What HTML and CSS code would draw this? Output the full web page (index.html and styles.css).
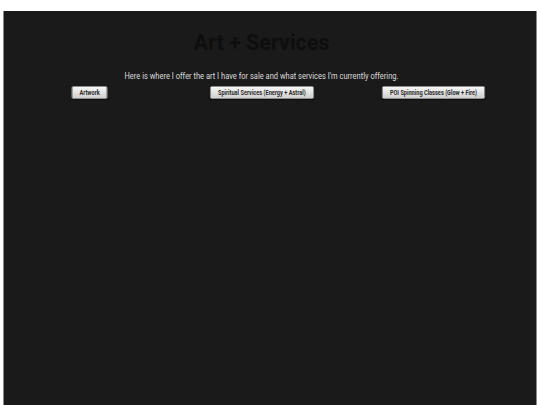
FILE: index.html
```html
<!DOCTYPE html>
<html lang="en">
<head>
<meta charset="utf-8">
<title>Art + Services</title>
<link rel="stylesheet" href="styles.css">
</head>
<body>
<main class="panel">
  <h1 class="title">Art + Services</h1>
  <p class="intro">Here is where I offer the art I have for sale and what services I'm currently offering.</p>
  <nav class="choices">
    <button class="choice" type="button">Artwork</button>
    <button class="choice" type="button">Spiritual Services (Energy + Astral)</button>
    <button class="choice" type="button">POI Spinning Classes (Glow + Fire)</button>
  </nav>
</main>
</body>
</html>
```

FILE: styles.css
```css
html, body {
  margin: 0;
  padding: 0;
  background: #ffffff;
}

body {
  font-family: Roboto, "Liberation Sans", sans-serif;
}

.panel {
  margin: 11px 3px 0;
  min-height: 394px;
  box-sizing: border-box;
  background: #1a1a1a;
  border-left: 1px solid #8a8a8a;
  border-right: 1px solid #8a8a8a;
  padding: 19px 17px 0 0;
  display: flex;
  flex-direction: column;
}

.title {
  margin: 0;
  font-size: 21.5px;
  line-height: 26px;
  font-weight: 700;
  color: #0e0e0e;
  text-align: center;
}

.intro {
  margin: 14px 0 0;
  font-size: 9px;
  line-height: 12px;
  color: #dcdcdc;
  text-align: center;
  transform: scaleX(0.835);
}

.choices {
  margin-top: 4px;
  display: grid;
  grid-template-columns: repeat(3, 1fr);
  justify-items: center;
}

.choice {
  height: 13px;
  padding: 0 9px;
  font-family: Roboto, "Liberation Sans", sans-serif;
  font-size: 7px;
  font-weight: 700;
  color: #2a2a2a;
  background: linear-gradient(#f6f6f6, #cfcfcf);
  border: 1px solid #9a9a9a;
  border-radius: 2px;
  box-shadow: 0 1px 1px rgba(0, 0, 0, 0.5);
  transform: scaleX(0.8);
}
```
